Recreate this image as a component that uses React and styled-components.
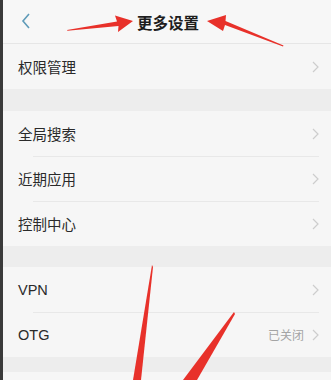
import React from 'react'
import styled, { createGlobalStyle } from 'styled-components'

const Global = createGlobalStyle`
  html, body {
    margin: 0;
    padding: 0;
    background: #efefef;
  }
  body {
    font-family: "Noto Sans CJK SC", "Noto Sans", sans-serif;
  }
`

const Page = styled.div`
  position: relative;
  display: flex;
  width: 331px;
  height: 380px;
  overflow: hidden;
`

const Edge = styled.div`
  width: 3px;
  flex: none;
  background: #3a3a3a;
`

const Screen = styled.div`
  flex: 1;
  display: flex;
  flex-direction: column;
  background: #efefef;
`

const Header = styled.div`
  height: 43px;
  flex: none;
  display: flex;
  align-items: center;
  justify-content: center;
  position: relative;
  background: #f7f7f7;
  border-bottom: 1px solid #e6e6e6;
`

const Back = styled.div`
  position: absolute;
  left: 17px;
  top: 12px;
  display: flex;
`

const Title = styled.div`
  font-size: 15.5px;
  font-weight: 700;
  color: #1e1e1e;
  margin-left: 2px;
`

const Group = styled.div`
  display: flex;
  flex-direction: column;
  background: #f6f6f6;
`

const Gap = styled.div`
  height: ${(p) => p.h}px;
  flex: none;
  background: #ededed;
`

const Row = styled.div`
  height: 45px;
  flex: none;
  display: flex;
  align-items: center;
  padding: 0 12px 0 15px;
  position: relative;
  ${(p) =>
    p.divider &&
    `
    &::before {
      content: '';
      position: absolute;
      top: 0;
      left: 30px;
      right: 12px;
      height: 1px;
      background: #e8e8e8;
    }
  `}
`

const Label = styled.div`
  flex: 1;
  font-size: 14.5px;
  color: #2a2a2a;
  font-family: ${(p) => (p.latin ? '"Liberation Sans", sans-serif' : 'inherit')};
`

const Value = styled.div`
  font-size: 12px;
  color: #a4a4a4;
  margin-right: 8px;
`

const Chevron = () => (
  <svg width="7" height="12" viewBox="0 0 7 12">
    <path d="M1 1l5 5-5 5" fill="none" stroke="#cdcdcd" strokeWidth="1.2" />
  </svg>
)

const Arrows = styled.svg`
  position: absolute;
  left: 0;
  top: 0;
  pointer-events: none;
`

function Item({ label, value, divider, latin }) {
  return (
    <Row divider={divider}>
      <Label latin={latin}>{label}</Label>
      {value && <Value>{value}</Value>}
      <Chevron />
    </Row>
  )
}

export default function App() {
  return (
    <Page>
      <Global />
      <Edge />
      <Screen>
        <Header>
          <Back>
            <svg width="12" height="18" viewBox="0 0 12 18">
              <path d="M9 2L3 9l6 7" fill="none" stroke="#5f9bb8" strokeWidth="1.6" />
            </svg>
          </Back>
          <Title>更多设置</Title>
        </Header>
        <Group>
          <Item label="权限管理" />
        </Group>
        <Gap h={22} />
        <Group>
          <Item label="全局搜索" />
          <Item label="近期应用" divider />
          <Item label="控制中心" divider />
        </Group>
        <Gap h={21} />
        <Group>
          <Item label="VPN" latin />
          <Item label="OTG" latin value="已关闭" divider />
        </Group>
        <Gap h={15} />
        <Group>
          <Row />
        </Group>
      </Screen>
      <Arrows width="331" height="380" viewBox="0 0 331 380">
        <g fill="#e8312a">
          <path d="M67 30 L117 21.5 L115 15.5 L133 21 L118 32 L118.5 26 L67.5 30.8 Z" />
          <path d="M283 46.5 L225 25 L223 31 L207 21 L226 15 L225.5 21 L283.5 45.5 Z" />
          <path d="M152 265 L153 267 L141 380 L133 380 Z" />
          <path d="M234 312 L235 314 L197 380 L183 380 Z" />
        </g>
      </Arrows>
    </Page>
  )
}
